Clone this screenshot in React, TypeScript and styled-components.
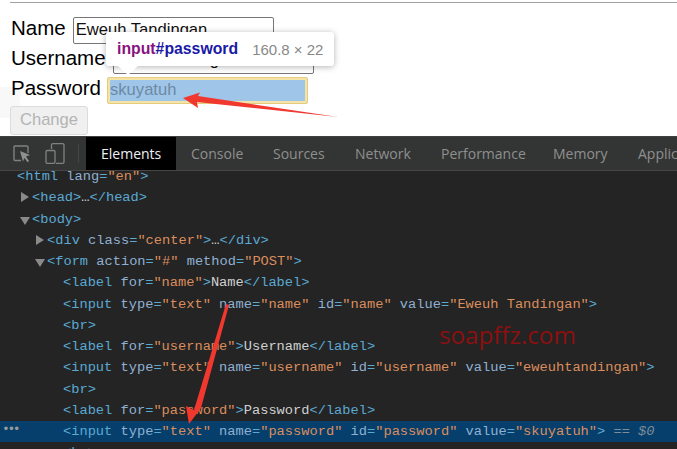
import React from "react";
import styled, { createGlobalStyle } from "styled-components";

const Global = createGlobalStyle`
  html, body { margin: 0; padding: 0; background: #fff; }
  #root { width: 677px; height: 449px; overflow: hidden; }
`;

const Shot = styled.div`
  position: relative;
  width: 677px;
  height: 449px;
  overflow: hidden;
  display: flex;
  flex-direction: column;
  font-family: "Liberation Sans", Arial, sans-serif;
`;

const Page = styled.section`
  height: 136px;
  flex: none;
  box-sizing: border-box;
  background: #fff;
  padding: 15px 0 0 10px;
  position: relative;
  &::before {
    content: "";
    position: absolute;
    left: 10px;
    right: 0;
    top: 2px;
    height: 1px;
    background: #a0a0a0;
  }
  &::after {
    content: "";
    position: absolute;
    left: 0;
    top: 87px;
    width: 20px;
    height: 31px;
    background: #f8f8f8;
    z-index: 0;
  }
`;

const FormRow = styled.div<{ $h: number; $gap: number }>`
  position: relative;
  z-index: 1;
  display: flex;
  align-items: center;
  gap: ${(p) => p.$gap}px;
  height: ${(p) => p.$h}px;
`;

const Label = styled.label`
  font-size: 20.5px;
  color: #000;
  padding: 0 0 4px 1px;
  line-height: 24px;
`;

const Field = styled.div`
  box-sizing: border-box;
  width: 201px;
  height: 27px;
  border: 1px solid #767676;
  border-radius: 2px;
  background: #fff;
  font-size: 16.6px;
  line-height: 24px;
  padding-left: 2px;
  color: #111;
  white-space: nowrap;
  overflow: hidden;
`;

const HighlightField = styled.div`
  box-sizing: border-box;
  width: 201px;
  height: 27px;
  border: 1px solid #e6cc7e;
  border-radius: 2px;
  background: #9fc5e8;
  padding: 0 0 0 2px;
  font-size: 16.6px;
  line-height: 24px;
  color: #6d8aa5;
  box-shadow: inset 0 0 0 2px #f3e3a6;
`;

const ChangeButton = styled.button`
  position: relative;
  z-index: 1;
  display: block;
  box-sizing: border-box;
  width: 78px;
  height: 29px;
  margin-top: 1px;
  border: 1px solid #dcdcdc;
  border-radius: 3px;
  background: #f0f0f0;
  color: #b4b4b4;
  font-family: inherit;
  font-size: 16.6px;
  padding: 0 0 2px;
`;

const Toolbar = styled.div`
  height: 35px;
  flex: none;
  box-sizing: border-box;
  background: #333534;
  border-top: 1px solid #3f3f3f;
  border-bottom: 1px solid #454545;
  display: flex;
  align-items: stretch;
  position: relative;
  overflow: hidden;
`;

const ToolIcons = styled.div`
  width: 86px;
  flex: none;
  display: flex;
  align-items: center;
  padding-left: 13px;
  box-sizing: border-box;
  gap: 14px;
  position: relative;
  &::after {
    content: "";
    position: absolute;
    right: 7px;
    top: 7px;
    bottom: 7px;
    width: 1px;
    background: #454545;
  }
`;

const Tab = styled.div<{ $active?: boolean; $w: number }>`
  flex: none;
  width: ${(p) => p.$w}px;
  box-sizing: border-box;
  padding-left: 15px;
  font-family: "Open Sans", sans-serif;
  font-size: 14px;
  line-height: 33px;
  white-space: nowrap;
  color: ${(p) => (p.$active ? "#f0f0f0" : "#8f8f8f")};
  background: ${(p) => (p.$active ? "#000" : "transparent")};
`;

const Code = styled.div`
  flex: 1;
  min-height: 0;
  background: #242424;
  overflow: hidden;
  font-family: "Liberation Mono", monospace;
  font-size: 13.7px;
`;

const CodeInner = styled.div`
  margin-top: -5px;
`;

const Line = styled.div<{ $indent: number; $selected?: boolean }>`
  position: relative;
  height: 21.25px;
  line-height: 21.25px;
  padding-left: ${(p) => p.$indent}px;
  white-space: pre;
  background: ${(p) => (p.$selected ? "#063f6b" : "transparent")};
`;

const Tag = styled.span`
  color: #5ba9d3;
`;
const Attr = styled.span`
  color: #8fb0d2;
`;
const Val = styled.span`
  color: #dc8d5d;
`;
const Txt = styled.span`
  color: #d0d0d0;
`;
const Eq = styled.span`
  color: #7f8c99;
  font-style: italic;
`;

const Twisty = styled.span<{ $open?: boolean }>`
  position: absolute;
  margin-left: -11px;
  top: ${(p) => (p.$open ? 8 : 5)}px;
  width: 0;
  height: 0;
  ${(p) =>
    p.$open
      ? `border-left: 5px solid transparent; border-right: 5px solid transparent; border-top: 8px solid #8a8a8a; margin-left: -12px;`
      : `border-top: 5px solid transparent; border-bottom: 5px solid transparent; border-left: 8px solid #8a8a8a;`}
`;

const Dots = styled.span`
  position: absolute;
  left: 2px;
  top: -2px;
  color: #9a9a9a;
  font-size: 13px;
  letter-spacing: -2.4px;
`;

const Tooltip = styled.div`
  position: absolute;
  left: 106px;
  top: 32px;
  width: 228px;
  height: 34px;
  box-sizing: border-box;
  background: #fff;
  border-radius: 3px;
  box-shadow: 0 1px 6px rgba(0, 0, 0, 0.3);
  display: flex;
  align-items: center;
  padding-left: 11px;
  font-size: 15.8px;
  white-space: nowrap;
  z-index: 2;
  &::after {
    content: "";
    position: absolute;
    left: 12px;
    top: 100%;
    border-left: 10.5px solid transparent;
    border-right: 10.5px solid transparent;
    border-top: 9px solid #fff;
  }
`;
const TipTag = styled.b`
  color: #881280;
`;
const TipId = styled.b`
  color: #1a1aa6;
`;
const TipSize = styled.span`
  color: #888;
  font-size: 15px;
  margin-left: 14px;
`;

const Watermark = styled.div`
  position: absolute;
  left: 439px;
  top: 319px;
  font-family: "Open Sans", sans-serif;
  font-size: 24.2px;
  line-height: 32px;
  color: #8c1010;
`;

const ArrowLayer = styled.svg`
  position: absolute;
  left: 0;
  top: 0;
  z-index: 3;
  pointer-events: none;
`;

const tabs: [string, number][] = [
  ["Console", 82],
  ["Sources", 82],
  ["Network", 86],
  ["Performance", 112],
  ["Memory", 85],
  ["Application", 100],
];

const a = (name: string, value: string) => (
  <>
    <Attr>{" " + name}</Attr>
    <Tag>=</Tag>
    <Val>"{value}"</Val>
  </>
);

const labelLine = (forName: string, text: string) => (
  <Line $indent={63}>
    <Tag>&lt;label</Tag>
    {a("for", forName)}
    <Tag>&gt;</Tag>
    <Txt>{text}</Txt>
    <Tag>&lt;/label&gt;</Tag>
  </Line>
);

const inputLine = (name: string, value: string, selected?: boolean) => (
  <Line $indent={63} $selected={selected}>
    {selected && <Dots>•••</Dots>}
    <Tag>&lt;input</Tag>
    {a("type", "text")}
    {a("name", name)}
    {a("id", name)}
    {a("value", value)}
    <Tag>&gt;</Tag>
    {selected && <Eq> == $0</Eq>}
  </Line>
);

const brLine = (
  <Line $indent={63}>
    <Tag>&lt;br&gt;</Tag>
  </Line>
);

export default function App() {
  return (
    <Shot>
      <Global />
      <Page>
        <FormRow $h={30} $gap={7}>
          <Label>Name</Label>
          <Field>Eweuh Tandingan</Field>
        </FormRow>
        <FormRow $h={30} $gap={7}>
          <Label>Username</Label>
          <Field>eweuhtandingan</Field>
        </FormRow>
        <FormRow $h={30} $gap={6}>
          <Label>Password</Label>
          <HighlightField>skuyatuh</HighlightField>
        </FormRow>
        <ChangeButton disabled>Change</ChangeButton>
      </Page>
      <Toolbar>
        <ToolIcons>
          <svg width="18" height="18" viewBox="0 0 18 18" fill="none">
            <path d="M8 15.500H2a1 1 0 0 1-1-1V2a1 1 0 0 1 1-1h12a1 1 0 0 1 1 1v6" stroke="#808080" strokeWidth="1.4" />
            <path d="M7 6l10 4-4 1.600L16 16l-1.400 1.300-3.200-4.200L10 16.500z" fill="#8f8f8f" />
          </svg>
          <svg width="20" height="21" viewBox="0 0 20 21" fill="none" stroke="#808080" strokeWidth="1.3">
            <path d="M6.500 6V2a1.300 1.300 0 0 1 1.300-1.300h9.900A1.300 1.300 0 0 1 19 2v17a1.300 1.300 0 0 1-1.300 1.300H11" />
            <rect x="1" y="7.500" width="9" height="12.800" rx="1.300" />
          </svg>
        </ToolIcons>
        <Tab $active $w={90}>Elements</Tab>
        {tabs.map(([t, w]) => (
          <Tab key={t} $w={w}>{t}</Tab>
        ))}
      </Toolbar>
      <Code>
        <CodeInner>
          <Line $indent={17}>
            <Tag>&lt;html</Tag>
            {a("lang", "en")}
            <Tag>&gt;</Tag>
          </Line>
          <Line $indent={32}>
            <Twisty />
            <Tag>&lt;head&gt;</Tag>
            <Txt>…</Txt>
            <Tag>&lt;/head&gt;</Tag>
          </Line>
          <Line $indent={32}>
            <Twisty $open />
            <Tag>&lt;body&gt;</Tag>
          </Line>
          <Line $indent={47}>
            <Twisty />
            <Tag>&lt;div</Tag>
            {a("class", "center")}
            <Tag>&gt;</Tag>
            <Txt>…</Txt>
            <Tag>&lt;/div&gt;</Tag>
          </Line>
          <Line $indent={47}>
            <Twisty $open />
            <Tag>&lt;form</Tag>
            {a("action", "#")}
            {a("method", "POST")}
            <Tag>&gt;</Tag>
          </Line>
          {labelLine("name", "Name")}
          {inputLine("name", "Eweuh Tandingan")}
          {brLine}
          {labelLine("username", "Username")}
          {inputLine("username", "eweuhtandingan")}
          {brLine}
          {labelLine("password", "Password")}
          {inputLine("password", "skuyatuh", true)}
          {brLine}
        </CodeInner>
      </Code>
      <Tooltip>
        <TipTag>input</TipTag>
        <TipId>#password</TipId>
        <TipSize>160.8 × 22</TipSize>
      </Tooltip>
      <Watermark>soapffz.com</Watermark>
      <ArrowLayer width="677" height="449" viewBox="0 0 677 449">
        <path d="M183 98 L200 92.500 L198 96 L338 117 L197 102 L198 108 Z" fill="#f0382f" />
        <path d="M226 304 L229 305 L201 408 L189 424 L186 406 L194 410 Z" fill="#f0382f" />
      </ArrowLayer>
    </Shot>
  );
}
